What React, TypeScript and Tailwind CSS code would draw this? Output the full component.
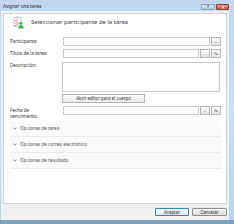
import React from 'react'

const font = { fontFamily: '"Noto Sans", "Open Sans", sans-serif' }

function SmallBtn({ children, w = 'w-[10px]' }: { children: React.ReactNode; w?: string }) {
  return (
    <div className={`${w} h-[9px] shrink-0 border border-[#b5b5b5] bg-gradient-to-b from-[#fbfbfb] to-[#e6e6e6] flex items-center justify-center text-[4px] leading-none text-[#333]`}>
      {children}
    </div>
  )
}

function Field({ label, children }: { label: React.ReactNode; children: React.ReactNode }) {
  return (
    <div className="flex items-start">
      <div className="w-[53px] shrink-0 text-[4.6px] leading-[6px] text-[#333] pt-[1px]">{label}</div>
      <div className="flex-1 flex gap-[1px]">{children}</div>
    </div>
  )
}

function Input() {
  return <div className="flex-1 h-[9px] border border-[#c5c8cd] bg-white" />
}

function Section({ title }: { title: string }) {
  return (
    <div className="h-[16px] flex items-center bg-[#fafafa] border-b border-[#ebebeb] pl-[3px] gap-[3px]">
      <svg width="4" height="3" viewBox="0 0 4 3" className="shrink-0">
        <path d="M0.5 0.5 L2 2.2 L3.5 0.5" fill="none" stroke="#666" strokeWidth="0.7" />
      </svg>
      <span className="text-[4.6px] leading-none text-[#555]">{title}</span>
    </div>
  )
}

function TaskIcon() {
  return (
    <svg width="11" height="13" viewBox="0 0 11 13">
      <rect x="1" y="1.5" width="7" height="9" fill="#fff" stroke="#9aa3ad" strokeWidth="0.6" />
      <rect x="3" y="0.6" width="3" height="1.6" fill="#b9c1c9" />
      <path d="M2 4 l0.8 0.9 l1.6 -1.8" fill="none" stroke="#d33" strokeWidth="0.7" />
      <path d="M2 6.5 l0.8 0.9 l1.6 -1.8" fill="none" stroke="#d33" strokeWidth="0.7" />
      <path d="M2 9 l0.8 0.9 l1.6 -1.8" fill="none" stroke="#d33" strokeWidth="0.7" />
      <circle cx="8" cy="7.3" r="1.4" fill="#3fae3f" />
      <path d="M5.4 12.5 Q5.6 9 8 9 Q10.4 9 10.6 12.5 Z" fill="#3fae3f" />
      <path d="M4.5 7 L6.5 8.5" stroke="#2a6fd1" strokeWidth="0.7" />
    </svg>
  )
}

export default function App() {
  return (
    <div style={font} className="w-[234px] h-[224px] bg-gradient-to-b from-[#c2d7ee] via-[#cddff2] to-[#bcd3ea] flex flex-col border-b-[4px] border-[#7aa3c0] overflow-hidden">
      {/* barra de título */}
      <div className="h-[11px] shrink-0 flex items-start">
        <span className="text-[4.6px] leading-none text-[#1e1e1e] pl-[3px] pt-[4px]">Asignar una tarea</span>
        <div className="ml-auto mr-[5px] mt-[4px] flex gap-[1px]">
          <div className="w-[14px] h-[6px] rounded-[1px] border border-[#8ea7c0] bg-gradient-to-b from-[#dce8f4] to-[#b7cbe0] flex items-center justify-center text-[4px] leading-none text-[#2d3e55] font-bold">?</div>
          <div className="w-[13px] h-[6px] rounded-[1px] border border-[#8a3b33] bg-gradient-to-b from-[#e59a8f] to-[#c54b3c] flex items-center justify-center">
            <svg width="4" height="3" viewBox="0 0 4 3">
              <path d="M0.5 0.3 L3.5 2.7 M3.5 0.3 L0.5 2.7" stroke="#fff" strokeWidth="0.8" />
            </svg>
          </div>
        </div>
      </div>

      {/* área cliente */}
      <div className="flex-1 ml-[1px] mr-[5px] bg-[#f0f0f0] flex flex-col px-[2px] pt-[2px]">
        <div className="h-[191px] shrink-0 bg-white border border-[#d0d0d0] flex flex-col pl-[6px] pr-[5px]">
          <div className="mt-[2px] h-[13px] flex items-center gap-[7px] pl-[3px]">
            <TaskIcon />
            <span className="text-[5.9px] leading-none text-[#3a3a3a]">Seleccionar participante de la tarea</span>
          </div>

          <div className="mt-[8px] flex flex-col">
            <Field label="Participante:">
              <Input />
              <SmallBtn>...</SmallBtn>
            </Field>
            <div className="mt-[3px]">
              <Field label="Título de la tarea:">
                <Input />
                <SmallBtn>...</SmallBtn>
                <SmallBtn>fx</SmallBtn>
              </Field>
            </div>
            <div className="mt-[4px] flex items-start">
              <div className="w-[52px] shrink-0 text-[4.6px] leading-[6px] text-[#333]">Descripción:</div>
              <div className="flex-1 flex flex-col">
                <div className="h-[30px] border border-[#c5c8cd] bg-white mr-[1px]" />
                <div className="mt-[2px] w-[83px] h-[9px] border border-[#b5b5b5] bg-gradient-to-b from-[#fbfbfb] to-[#e8e8e8] flex items-center justify-center text-[4.4px] leading-none text-[#333]">
                  Abrir editor para el cuerpo
                </div>
              </div>
            </div>
            <div className="mt-[3px]">
              <Field label={<>Fecha de<br />vencimiento:</>}>
                <Input />
                <SmallBtn>...</SmallBtn>
                <SmallBtn>fx</SmallBtn>
              </Field>
            </div>
          </div>

          <div className="mt-[2px] flex flex-col">
            <Section title="Opciones de tarea" />
            <Section title="Opciones de correo electrónico" />
            <Section title="Opciones de resultado" />
          </div>
        </div>

        <div className="flex-1 flex items-center justify-end gap-[3px]">
          <div className="w-[34px] h-[8px] rounded-[1px] border border-[#3c7fb1] bg-gradient-to-b from-[#f2f8fd] to-[#dbe9f5] flex items-center justify-center text-[4.4px] leading-none text-[#222]">Aceptar</div>
          <div className="w-[35px] h-[8px] rounded-[1px] border border-[#8e8f8f] bg-gradient-to-b from-[#f6f6f6] to-[#dedede] flex items-center justify-center text-[4.4px] leading-none text-[#222]">Cancelar</div>
        </div>
      </div>
    </div>
  )
}
